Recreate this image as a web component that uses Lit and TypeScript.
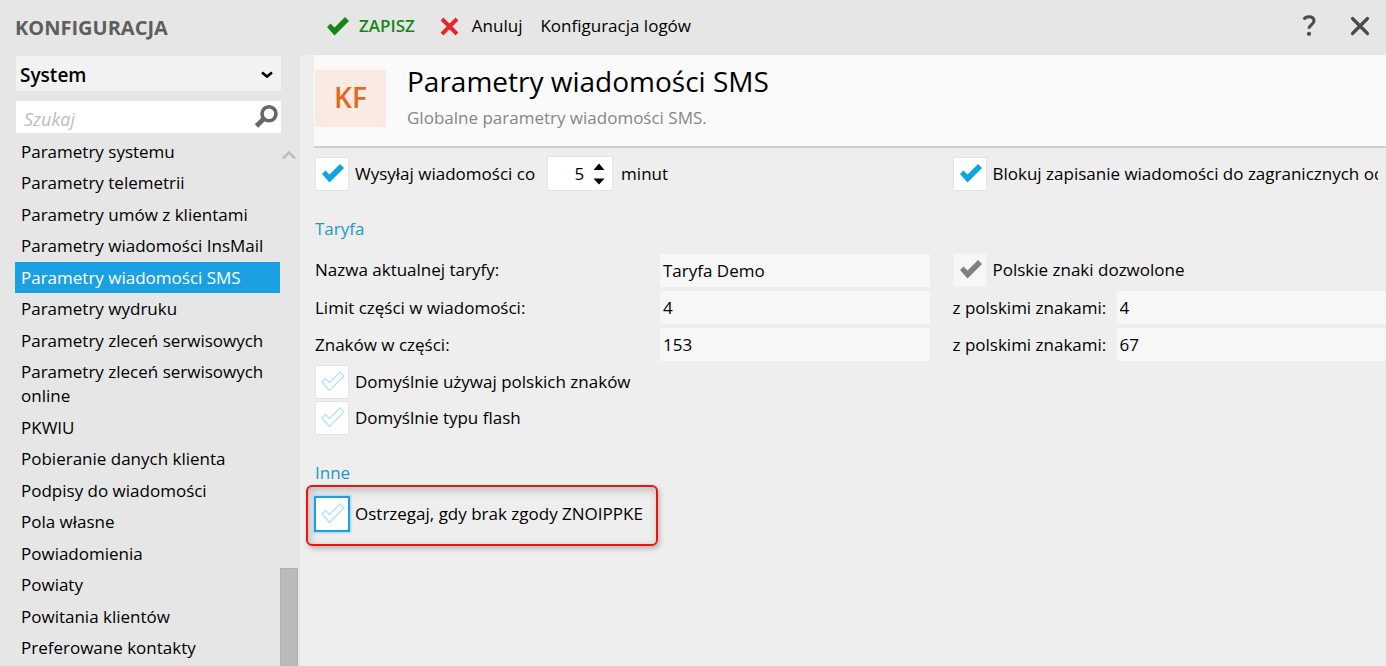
import { LitElement, html, css } from "lit";
import { customElement, property, state } from "lit/decorators.js";
import { classMap } from "lit/directives/class-map.js";

const TICK = "M2 12 L5.5 8.5 L9.5 12.5 L20 2 L24 6 L9.5 20.5 Z";

@customElement("tick-box")
class TickBox extends LitElement {
  @property() label = "";
  @property({ type: Boolean }) checked = false;
  @property({ type: Boolean }) disabled = false;
  @property({ type: Boolean }) active = false;

  static styles = css`
    :host {
      display: block;
      min-width: 0;
    }
    .row {
      display: flex;
      align-items: center;
      gap: 6px;
      white-space: nowrap;
    }
    .box {
      display: grid;
      flex: none;
      width: 34px;
      height: 34px;
    }
    .input,
    .mark {
      grid-area: 1 / 1;
    }
    .input {
      appearance: none;
      box-sizing: border-box;
      width: 34px;
      height: 34px;
      margin: 0;
      border: 1px solid #e4e4e4;
      background: #fff;
      outline: none;
    }
    .input:disabled {
      border-color: #f1f1f1;
      background: #f7f7f7;
    }
    .active .input {
      border: 1px solid #1ba1e2;
      box-shadow: 0 0 0 1px #1ba1e2, 0 0 2px 2px #9fd4f0;
    }
    .mark {
      width: 26px;
      height: 22px;
      margin: 5px 0 0 5px;
      pointer-events: none;
      fill: none;
      stroke: #b5e3f6;
      stroke-width: 1.4;
    }
    .input:checked + .mark {
      fill: #0ba5e3;
      stroke: none;
    }
    .input:checked:disabled + .mark {
      fill: #808080;
    }
    .text {
      overflow: hidden;
      line-height: 24px;
    }
  `;

  render() {
    return html`<label class=${classMap({ row: true, active: this.active })}>
      <span class="box">
        <input class="input" type="checkbox" .checked=${this.checked} ?disabled=${this.disabled} />
        <svg class="mark" viewBox="0 0 26 22" aria-hidden="true"><path d=${TICK} /></svg>
      </span>
      <span class="text">${this.label}</span>
    </label>`;
  }
}

@customElement("app-root")
class AppRoot extends LitElement {
  @state() private selected = "Parametry wiadomości SMS";

  private entries = [
    "Parametry systemu",
    "Parametry telemetrii",
    "Parametry umów z klientami",
    "Parametry wiadomości InsMail",
    "Parametry wiadomości SMS",
    "Parametry wydruku",
    "Parametry zleceń serwisowych",
    "Parametry zleceń serwisowych online",
    "PKWIU",
    "Pobieranie danych klienta",
    "Podpisy do wiadomości",
    "Pola własne",
    "Powiadomienia",
    "Powiaty",
    "Powitania klientów",
    "Preferowane kontakty",
  ];

  static styles = css`
    :host {
      display: grid;
      grid-template-columns: 300px minmax(0, 1fr);
      height: 100vh;
      overflow: hidden;
      background: #e6e6e6;
      color: #000;
      font-family: "Open Sans", "Noto Sans", sans-serif;
      font-size: 17px;
      line-height: 24px;
    }
    button,
    input,
    select {
      font: inherit;
      color: inherit;
      margin: 0;
      border: 0;
      border-radius: 0;
      outline: none;
      box-sizing: border-box;
    }
    button {
      padding: 0;
      background: none;
    }
    h1,
    h2,
    h3,
    p,
    ul {
      margin: 0;
      padding: 0;
      font-weight: 400;
    }

    .side {
      display: flex;
      flex-direction: column;
      min-height: 0;
    }
    .side-title {
      padding: 14px 15px 0;
      color: #5e5e5e;
      font-size: 20px;
      font-weight: 700;
      line-height: 28px;
    }
    .picker,
    .search {
      display: grid;
      align-items: center;
      margin: 14px 19px 0 16px;
    }
    .search {
      margin-top: 10px;
    }
    .picker > *,
    .search > * {
      grid-area: 1 / 1;
    }
    .picker-select {
      appearance: none;
      width: 100%;
      height: 35px;
      padding: 2px 4px 0;
      background: #f2f2f2;
      font-size: 19px;
      font-weight: 600;
    }
    .picker-icon {
      justify-self: end;
      width: 12px;
      height: 8px;
      margin: 2px 8px 0 0;
      pointer-events: none;
    }
    .search-input {
      width: 100%;
      height: 32px;
      padding: 4px 36px 0 8px;
      background: #fff;
      font-size: 18px;
    }
    .search-input::placeholder {
      color: #bdbdbd;
      font-style: italic;
      opacity: 1;
    }
    .search-button {
      justify-self: end;
      display: flex;
      margin-right: 3px;
    }
    .search-icon {
      width: 24px;
      height: 24px;
    }
    .list-area {
      display: grid;
      grid-template-columns: minmax(0, 1fr) 18px;
      flex: 1;
      min-height: 0;
      margin: 3px 2px 0 15px;
      overflow: hidden;
    }
    .list {
      list-style: none;
    }
    .entry {
      display: block;
      width: 100%;
      padding: 4px 6px 3px;
      text-align: left;
    }
    .item:nth-child(even) .entry {
      padding-bottom: 4px;
    }
    .entry.on {
      background: #1ba1e2;
      color: #fff;
    }
    .scroll {
      display: flex;
      flex-direction: column;
      align-items: center;
      justify-content: space-between;
      padding-top: 14px;
    }
    .scroll-up {
      width: 14px;
      height: 10px;
    }
    .thumb {
      box-sizing: border-box;
      width: 18px;
      height: 98px;
      border: 1px solid #b0b0b0;
      border-bottom: 0;
      background: #bababa;
    }

    .main {
      display: flex;
      flex-direction: column;
      min-width: 0;
    }
    .toolbar {
      display: flex;
      align-items: center;
      height: 55px;
      padding: 0 16px 3px 25px;
      box-sizing: border-box;
    }
    .tool {
      display: flex;
      align-items: center;
      gap: 10px;
      margin-right: 18px;
      white-space: nowrap;
    }
    .save {
      margin-right: 25px;
      color: #138613;
      font-weight: 600;
    }
    .cancel {
      gap: 13px;
    }
    .tool-icon {
      width: 26px;
      height: 22px;
    }
    .save {
      gap: 8px;
    }
    .cancel-icon {
      width: 19px;
      height: 19px;
    }
    .window {
      display: flex;
      align-items: center;
      gap: 34px;
      margin-left: auto;
    }
    .window-button {
      display: flex;
    }
    .body {
      flex: 1;
      padding-left: 14px;
      background: #eee;
    }
    .head {
      display: flex;
      align-items: flex-start;
      gap: 21px;
      padding: 15px 0 16px 1px;
      border-bottom: 2px solid #cfcfcf;
      background: #fafafa;
    }
    .avatar {
      flex: none;
      box-sizing: border-box;
      width: 71px;
      height: 57px;
      background: #f9ebe3;
      color: #e3691e;
      font-size: 28px;
      font-weight: 600;
      line-height: 54px;
      text-align: center;
    }
    .title {
      margin-top: -8px;
      font-size: 28px;
      line-height: 38px;
    }
    .subtitle {
      margin-top: 6px;
      color: #868686;
    }
    .form {
      padding: 8px 0 0 1px;
    }
    .grid {
      display: grid;
      grid-template-columns: 345px minmax(0, 1fr) 23px 164px minmax(0, 1fr);
      align-items: center;
      row-gap: 4px;
    }
    .half {
      grid-column: 1 / 3;
    }
    .right {
      grid-column: 4 / 6;
      margin-right: 8px;
    }
    .right-label {
      grid-column: 4;
    }
    .interval {
      display: flex;
      align-items: center;
    }
    .number {
      display: grid;
      width: 66px;
      margin: 0 8px 0 12px;
    }
    .number > * {
      grid-area: 1 / 1;
    }
    .number-input {
      appearance: textfield;
      width: 100%;
      height: 35px;
      padding: 0 28px 0 4px;
      border: 1px solid #e4e4e4;
      background: #fff;
      text-align: right;
    }
    .number-input::-webkit-inner-spin-button {
      display: none;
    }
    .spin {
      justify-self: end;
      align-self: center;
      width: 12px;
      height: 22px;
      margin-right: 8px;
      pointer-events: none;
    }
    .section {
      padding-top: 26px;
      color: #1b98c4;
      font-size: 17px;
    }
    .fields {
      margin-top: 12px;
    }
    .field {
      width: 100%;
      height: 33px;
      padding: 0 3px;
      background: #f7f7f7;
    }
    .ticks {
      display: grid;
      gap: 2px;
      margin-top: 4px;
    }
    .callout {
      width: max-content;
      margin: 0 0 0 -9px;
      padding: 10px 13px 13px 7px;
      border: 2px solid #ee1111;
      border-radius: 6px;
      box-shadow: 2px 3px 5px rgba(0, 0, 0, 0.22), inset 2px 3px 8px rgba(0, 0, 0, 0.22);
    }
  `;

  render() {
    return html`
      <nav class="side" aria-label="Konfiguracja">
        <h1 class="side-title">KONFIGURACJA</h1>
        <div class="picker">
          <select class="picker-select" aria-label="System">
            <option>System</option>
          </select>
          <svg class="picker-icon" viewBox="0 0 12 8" aria-hidden="true">
            <path d="M1 1.5 L6 5.5 L11 1.5" fill="none" stroke="#000" stroke-width="2.6" />
          </svg>
        </div>
        <div class="search">
          <input class="search-input" type="text" placeholder="Szukaj" aria-label="Szukaj" />
          <button class="search-button" aria-label="Szukaj">
            <svg class="search-icon" viewBox="0 0 24 24" aria-hidden="true">
              <circle cx="15" cy="8.8" r="7" fill="none" stroke="#666" stroke-width="3.6" />
              <path d="M10 13.5 L2.5 21" stroke="#666" stroke-width="4.8" />
            </svg>
          </button>
        </div>
        <div class="list-area">
          <ul class="list">
            ${this.entries.map(
              (name) => html`<li class="item">
                <button
                  class=${classMap({ entry: true, on: name === this.selected })}
                  @click=${() => (this.selected = name)}
                >${name}</button>
              </li>`
            )}
          </ul>
          <div class="scroll" aria-hidden="true">
            <svg class="scroll-up" viewBox="0 0 14 10">
              <path d="M1 8.5 L7 2.5 L13 8.5" fill="none" stroke="#b9b9b9" stroke-width="2.4" />
            </svg>
            <div class="thumb"></div>
          </div>
        </div>
      </nav>

      <main class="main">
        <div class="toolbar">
          <button class="tool save">
            <svg class="tool-icon" viewBox="0 0 26 22" aria-hidden="true"><path d=${TICK} fill="#138613" /></svg>
            ZAPISZ
          </button>
          <button class="tool cancel">
            <svg class="cancel-icon" viewBox="0 0 19 19" aria-hidden="true">
              <path d="M2 2 L17 17 M17 2 L2 17" stroke="#e6252d" stroke-width="4" />
            </svg>
            Anuluj
          </button>
          <button class="tool">Konfiguracja logów</button>
          <div class="window">
            <button class="window-button" aria-label="Pomoc">
              <svg width="14" height="22" viewBox="0 0 14 22" aria-hidden="true">
                <path d="M1.8 4.5 C3 2.4 5 1.8 7 1.8 C10 1.8 12 3.4 12 6 C12 9.6 7 9.4 7 13.8" fill="none" stroke="#4a4a4a" stroke-width="3" />
                <circle cx="7" cy="18.8" r="2.1" fill="#4a4a4a" />
              </svg>
            </button>
            <button class="window-button" aria-label="Zamknij">
              <svg width="20" height="20" viewBox="0 0 20 20" aria-hidden="true">
                <path d="M2.5 2.5 L17.5 17.5 M17.5 2.5 L2.5 17.5" stroke="#4a4a4a" stroke-width="3.2" stroke-linecap="round" />
              </svg>
            </button>
          </div>
        </div>

        <div class="body">
          <header class="head">
            <div class="avatar">KF</div>
            <div>
              <h2 class="title">Parametry wiadomości SMS</h2>
              <p class="subtitle">Globalne parametry wiadomości SMS.</p>
            </div>
          </header>

          <form class="form">
            <div class="grid">
              <div class="half interval">
                <tick-box label="Wysyłaj wiadomości co" checked></tick-box>
                <span class="number">
                  <input id="minutes" class="number-input" type="number" value="5" />
                  <svg class="spin" viewBox="0 0 12 22" aria-hidden="true">
                    <path d="M0.5 7 L6 0.5 L11.5 7 Z M0.5 15.5 L6 21.5 L11.5 15.5 Z" />
                  </svg>
                </span>
                <label for="minutes">minut</label>
              </div>
              <tick-box
                class="right"
                label="Blokuj zapisanie wiadomości do zagranicznych odbiorców"
                checked
              ></tick-box>
            </div>

            <h3 class="section">Taryfa</h3>
            <div class="grid fields">
              <label for="tariff">Nazwa aktualnej taryfy:</label>
              <input id="tariff" class="field" type="text" value="Taryfa Demo" readonly />
              <tick-box class="right" label="Polskie znaki dozwolone" checked disabled></tick-box>

              <label for="parts">Limit części w wiadomości:</label>
              <input id="parts" class="field" type="text" value="4" readonly />
              <label class="right-label" for="parts-pl">z polskimi znakami:</label>
              <input id="parts-pl" class="field" type="text" value="4" readonly />

              <label for="chars">Znaków w części:</label>
              <input id="chars" class="field" type="text" value="153" readonly />
              <label class="right-label" for="chars-pl">z polskimi znakami:</label>
              <input id="chars-pl" class="field" type="text" value="67" readonly />
            </div>
            <div class="ticks">
              <tick-box label="Domyślnie używaj polskich znaków"></tick-box>
              <tick-box label="Domyślnie typu flash"></tick-box>
            </div>

            <h3 class="section">Inne</h3>
            <div class="callout">
              <tick-box label="Ostrzegaj, gdy brak zgody ZNOIPPKE" active></tick-box>
            </div>
          </form>
        </div>
      </main>
    `;
  }
}
